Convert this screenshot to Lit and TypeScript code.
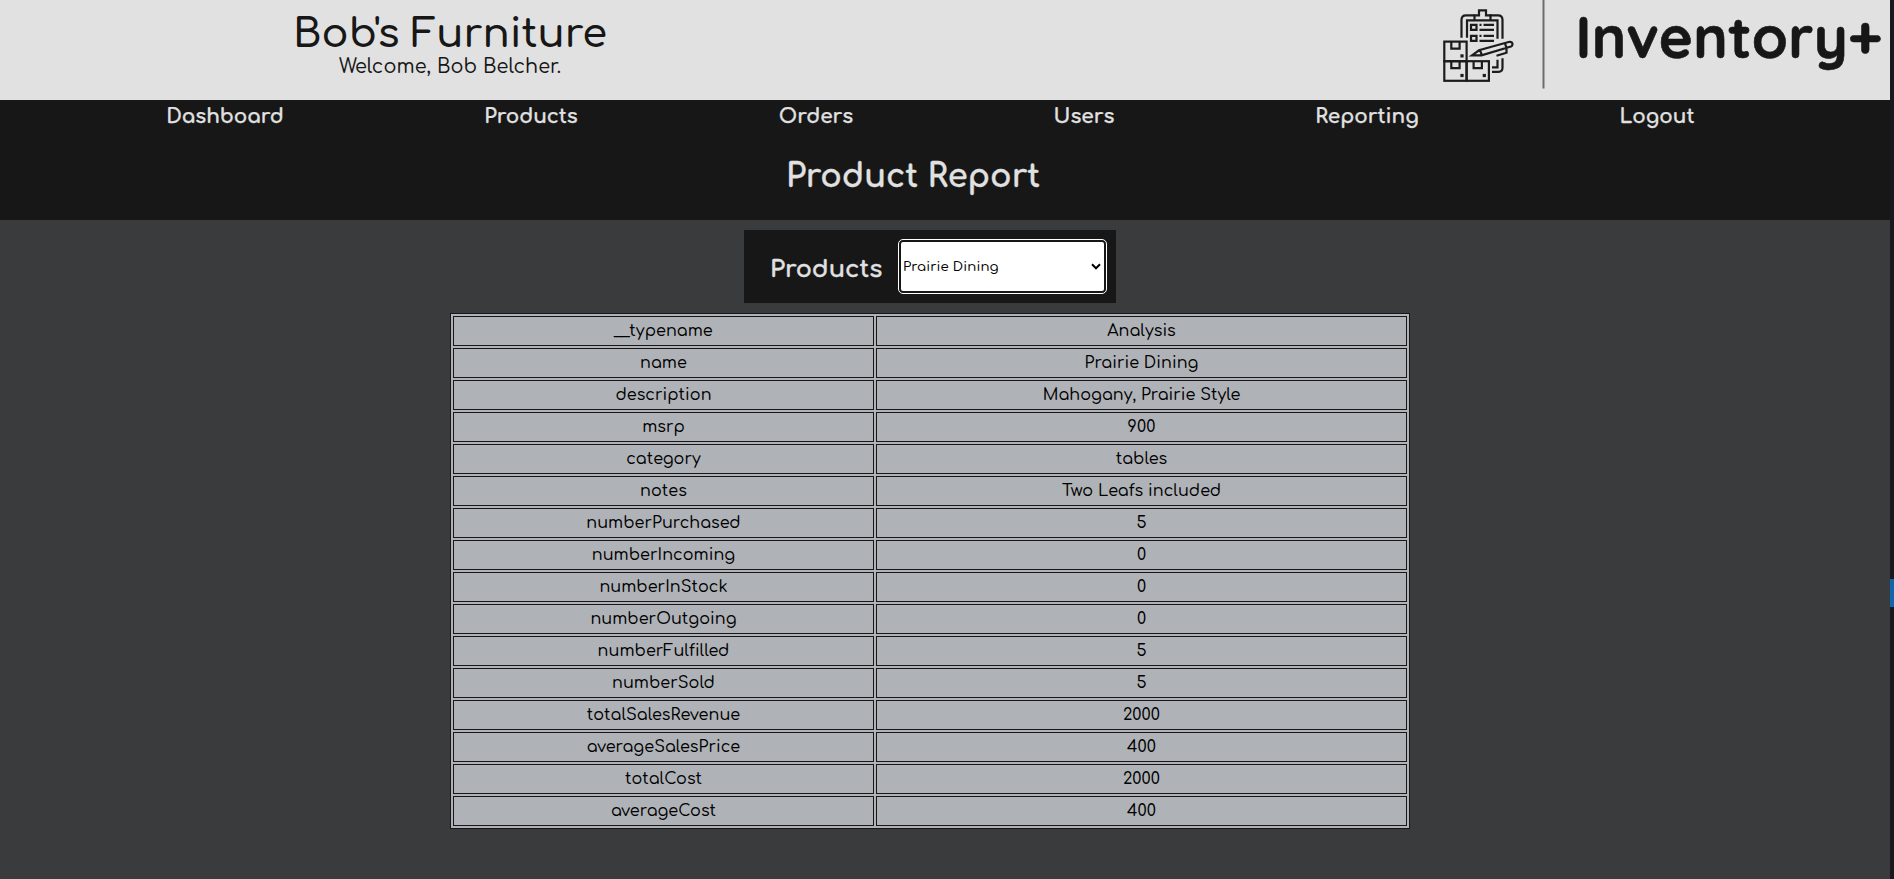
import { LitElement, html, css, svg } from "lit";
import { customElement } from "lit/decorators.js";

const rows: [string, string][] = [
  ["__typename", "Analysis"],
  ["name", "Prairie Dining"],
  ["description", "Mahogany, Prairie Style"],
  ["msrp", "900"],
  ["category", "tables"],
  ["notes", "Two Leafs included"],
  ["numberPurchased", "5"],
  ["numberIncoming", "0"],
  ["numberInStock", "0"],
  ["numberOutgoing", "0"],
  ["numberFulfilled", "5"],
  ["numberSold", "5"],
  ["totalSalesRevenue", "2000"],
  ["averageSalesPrice", "400"],
  ["totalCost", "2000"],
  ["averageCost", "400"],
];

const box = (x: number, y: number) => svg`
  <rect x=${x} y=${y} width="22.3" height="19.6" />
  <path d="M${x + 7} ${y}v7h8.3v-7" />
  <rect x=${x + 17.2} y=${y + 13.8} width="1" height="1" />`;

@customElement("app-root")
export class AppRoot extends LitElement {
  static styles = css`
    :host { display: block; font-family: Comfortaa, Quicksand, Lato, "Liberation Sans", sans-serif; }
    .screen { display: flex; height: 879px; overflow: hidden; }
    .page { width: 1890px; background: #3a3b3d; }
    .edge { flex: 1; background: #1a1720; padding-top: 579px; box-sizing: border-box; }
    .mark { height: 28px; background: #1166ab; }
    header { height: 100px; background: #e1e1e1; color: #171717; display: flex; justify-content: space-between; }
    .brand { width: 900px; text-align: center; }
    .store { font-size: 40px; line-height: 52px; height: 56px; padding-top: 8px; box-sizing: border-box; font-weight: 600; }
    .welcome { font-size: 19.2px; line-height: 22px; font-weight: 500; letter-spacing: .1px; }
    .logo { display: block; }
    .band { height: 120px; background: #171717; color: #e1e1e1; }
    nav { display: grid; grid-template-columns: 304px 308px 262px 274px 292px 288px; height: 32px; padding: 0 90px 0 73px; }
    .link { text-align: center; font-size: 20px; line-height: 33px; font-weight: 700; -webkit-text-stroke: .25px #e1e1e1; }
    h1 { margin: 0; width: 1826px; text-align: center; font-size: 32px; line-height: 42px; padding-top: 24px; font-weight: 700; -webkit-text-stroke: .3px #e1e1e1; }
    .panel { width: 372px; height: 73px; margin: 10px auto 0 744px; background: #171717; color: #e1e1e1; display: flex; align-items: center; box-sizing: border-box; padding: 0 9px 0 26px; justify-content: space-between; }
    .label { font-size: 24px; font-weight: 700; padding-top: 5px; -webkit-text-stroke: .3px #e1e1e1; }
    .select { width: 209px; height: 55px; box-sizing: border-box; border: 1px solid #fff; border-radius: 5px; padding: 2px; background: #171717; }
    .field { height: 49px; border-radius: 2px; background: #fff; color: #000; font-size: 13.333px; font-weight: 500; letter-spacing: .1px; display: flex; align-items: center; justify-content: space-between; padding: 0 3px 0 2px; }
    table { width: 960px; margin: 10px 0 0 450px; border: 1px solid #171717; border-spacing: 2px; background: #afb2b7; table-layout: fixed; color: #000; }
    td { border: 1px solid #171717; padding: 0; height: 28px; line-height: 28px; text-align: center; font-size: 16px; font-weight: 500; letter-spacing: .05px; }
    .key { width: 419px; }
  `;

  render() {
    return html`<div class="screen">
      <div class="page">
        <header>
          <div class="brand">
            <div class="store">Bob's Furniture</div>
            <div class="welcome">Welcome, Bob Belcher.</div>
          </div>
          <svg class="logo" width="460" height="100" viewBox="0 0 460 100">
            <g transform="translate(-.5 -.2)" fill="none" stroke="#1c1c1c" stroke-width="2.2">
              ${box(14.8, 41.8)}${box(14.8, 61.4)}${box(37.1, 61.4)}
              <path d="M32 38V20q0-4.500 4.500-4.500H45M60 15.500h8.500q4.500 0 4.500 4.500V39" />
              <path d="M37.500 38V20.500h30.500V39M45 20v-4.500h4.500v-5h7v5H61V20" />
              <path d="M41.500 25h5.500v5h-5.500zM41.500 36h5.500v5h-5.500zM50 25h2M54 25h10.500M50 30h14.500M50 36h2M54 36h10.500M50 41h14.500" />
              <path d="M42.500 55.500l7-5 30.500-8.500q3-.2 3 2.500q0 1.500-1.500 2.200L52 55.500zM50.500 50.500l2 5M75.500 43.500l1.500 4.500" />
              <path d="M77 49v4l-10 3M73 58.500V68q0 4-4 4H62.500M68 60v7.500H62.500" />
            </g>
            <path d="M113.500 0V88.500" stroke="#6c6c6c" stroke-width="2" />
            <text x="145.500" y="58" font-family="Quicksand, Lato, sans-serif" font-weight="700" font-size="58" fill="#171717" stroke="#171717" stroke-width=".6" textLength="306">Inventory+</text>
          </svg>
        </header>
        <div class="band">
          <nav>
            ${["Dashboard", "Products", "Orders", "Users", "Reporting", "Logout"].map((t) => html`<span class="link">${t}</span>`)}
          </nav>
          <h1>Product Report</h1>
        </div>
        <div class="panel">
          <span class="label">Products</span>
          <div class="select"><div class="field"><span>Prairie Dining</span>
            <svg width="10" height="7" viewBox="0 0 10 7"><path d="M1 1.300l4 4 4-4" fill="none" stroke="#000" stroke-width="2" /></svg></div></div>
        </div>
        <table><tbody>
          ${rows.map(([k, v]) => html`<tr><td class="key">${k}</td><td>${v}</td></tr>`)}
        </tbody></table>
      </div>
      <div class="edge"><div class="mark"></div></div>
    </div>`;
  }
}
